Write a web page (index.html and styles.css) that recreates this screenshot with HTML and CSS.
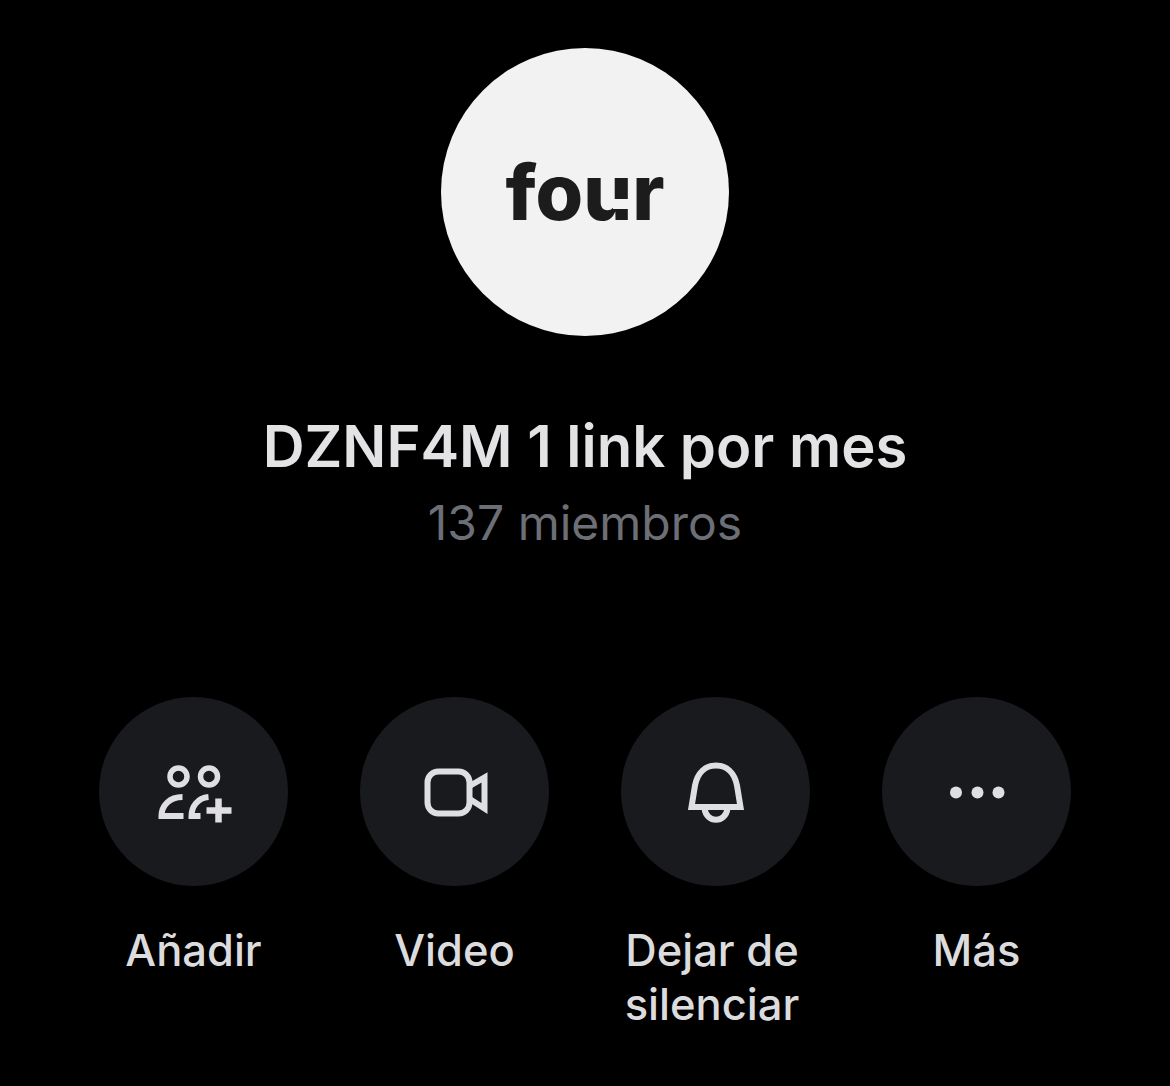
FILE: index.html
```html
<!DOCTYPE html>
<html lang="es">
<head>
<meta charset="utf-8">
<title>DZNF4M 1 link por mes</title>
<link rel="stylesheet" href="styles.css">
</head>
<body>
<main class="page">
  <div class="avatar">
    <span class="logo">fo<span class="logo-u">u<i class="notch"></i></span>r</span>
  </div>
  <h1 class="title">DZNF4M 1 link por mes</h1>
  <p class="subtitle">137 miembros</p>
  <div class="actions">
    <div class="action">
      <div class="circle">
        <svg class="icon" viewBox="148.5 756.5 90 70" width="90" height="70">
          <circle class="head" cx="178" cy="776" r="8.500"/>
          <circle class="head" cx="208.500" cy="776" r="8.500"/>
          <path d="M183 815.500H161C161 805 169 796.500 182 796.500"/>
          <path d="M200 815.500H191C191 806 197 797.500 208 796.500"/>
          <path class="plus" d="M218 798V822M206 810H231"/>
        </svg>
      </div>
      <span class="label">Añadir</span>
    </div>
    <div class="action">
      <div class="circle">
        <svg class="icon" viewBox="409.500 756.500 90 70" width="90" height="70">
          <rect x="427" y="771" width="42" height="42" rx="11"/>
          <path d="M470 785L484 777V808L470 799"/>
        </svg>
      </div>
      <span class="label">Video</span>
    </div>
    <div class="action">
      <div class="circle">
        <svg class="icon" viewBox="670.500 756.500 90 70" width="90" height="70">
          <path d="M691 806.500L694.500 785C697 772 705 765 715.500 765C726 765 734 772 736.500 785L740 806.500Z"/>
          <path d="M704 808C706 823 725 823 727 808"/>
        </svg>
      </div>
      <span class="label label-narrow">Dejar de silenciar</span>
    </div>
    <div class="action">
      <div class="circle">
        <svg class="icon" viewBox="931.500 756.500 90 70" width="90" height="70">
          <circle class="dot" cx="955.500" cy="792" r="6"/>
          <circle class="dot" cx="977" cy="792" r="6"/>
          <circle class="dot" cx="998" cy="792" r="6"/>
        </svg>
      </div>
      <span class="label">Más</span>
    </div>
  </div>
</main>
</body>
</html>
```
FILE: styles.css
```css
* { box-sizing: border-box; }
html, body { margin: 0; padding: 0; background: #000; }
body { font-family: Inter, "Liberation Sans", sans-serif; color: #e3e3e5; }
.page {
  width: 1170px;
  height: 1086px;
  overflow: hidden;
  padding-top: 48px;
  display: flex;
  flex-direction: column;
  align-items: center;
}
.avatar {
  width: 288px;
  height: 288px;
  border-radius: 50%;
  background: #f2f2f2;
  display: flex;
  align-items: center;
  justify-content: center;
}
.logo {
  font-family: Inter, sans-serif;
  font-weight: 800;
  font-size: 77px;
  line-height: 1;
  color: #1c1c1c;
}
.logo-u { position: relative; display: inline-block; }
.notch {
  position: absolute;
  right: 0;
  top: 45px;
  width: 19px;
  height: 10px;
  background: #f2f2f2;
}
.title {
  margin: 79px 0 0;
  font-size: 58px;
  line-height: 62px;
  font-weight: 600;
  color: #e3e3e5;
}
.subtitle {
  margin: 18px 0 0;
  font-size: 48px;
  line-height: 56px;
  font-weight: 400;
  color: #6c6f76;
}
.actions {
  margin-top: 146px;
  display: flex;
  gap: 72px;
}
.action {
  width: 189px;
  display: flex;
  flex-direction: column;
  align-items: center;
}
.circle {
  width: 189px;
  height: 189px;
  border-radius: 50%;
  background: #191a1e;
  display: flex;
  align-items: center;
  justify-content: center;
}
.icon {
  fill: none;
  stroke: #dfdfe1;
  stroke-width: 6;
  stroke-linejoin: miter;
}
.icon .head { stroke-width: 5.5; }
.icon .plus { stroke-width: 6.5; }
.icon .dot { fill: #dfdfe1; stroke: none; }
.label {
  margin-top: 37px;
  font-size: 43.5px;
  line-height: 54px;
  font-weight: 500;
  color: #dcdcde;
  text-align: center;
}
.label-narrow { margin-right: 7px; }
```
